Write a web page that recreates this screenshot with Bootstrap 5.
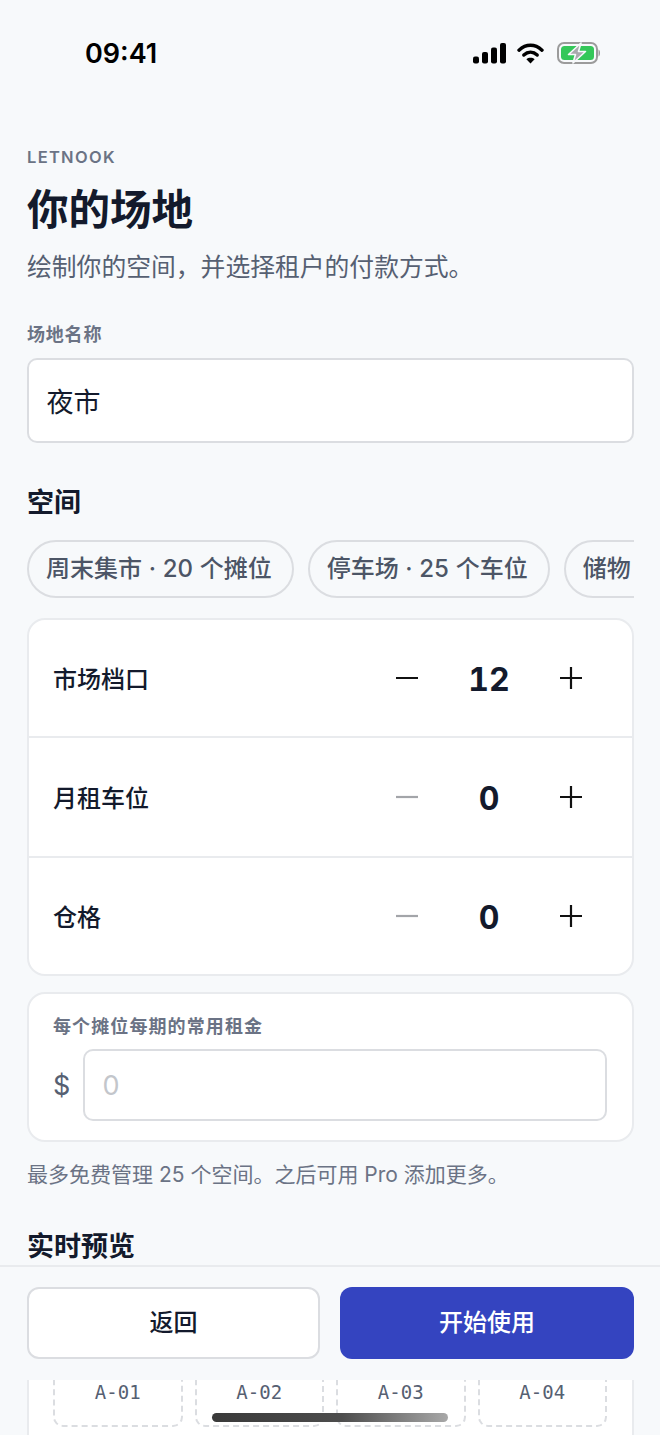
<!DOCTYPE html>
<html lang="zh">
<head>
<meta charset="utf-8">
<title>你的场地</title>
<link href="https://cdn.jsdelivr.net/npm/bootstrap@5.3.0/dist/css/bootstrap.min.css" rel="stylesheet">
<style>
html,body{height:1435px;overflow:hidden;background:#f7f9fb}
body{font-family:Inter,"Noto Sans CJK SC",sans-serif;color:#131a2c}
.phone{position:relative;width:660px;height:1435px;overflow:hidden;background:#f7f9fb}
.status-row{height:108px;padding:37px 59px 39px 85px}
.clock{font-size:27px;font-weight:600;line-height:32px;color:#000;padding-top:2px}
.status-icons{gap:11px}
.status-icons svg:last-child{margin-left:2px}
.content{padding:38px 26px 0 27px}
.brand{font-size:16.5px;font-weight:600;letter-spacing:1.3px;color:#6b7385;line-height:22px;margin:0}
.page-title{font-size:41.5px;font-weight:700;line-height:52px;margin:16px 0 0;color:#131a2c}
.sub{font-size:24.8px;line-height:32px;color:#566072;margin:15px 0 0}
.fld-label{font-size:18px;font-weight:600;letter-spacing:.8px;line-height:24px;color:#6b7385;margin:40px 0 11px;display:block}
.name-input.form-control{height:85px;font-size:27px;padding:0 17.5px;border:2px solid #dbdde1;border-radius:10px;color:#131a2c;background:#fff}
.sect{font-size:27px;font-weight:600;line-height:36px;margin:42px 0 0;color:#131a2c}
.chips{margin-top:19px;overflow:hidden;width:607px;gap:14px}
.chip-pill{flex:none;height:58px;border:2px solid #dbdde1;border-radius:29px;padding:0 20px 0 17px;font-size:24px;font-weight:500;word-spacing:.3px;line-height:54px;color:#4c5566;background:#f7f9fb;white-space:nowrap}
.chip-partial{width:120px}
.units.card{margin-top:20px;border:2px solid #e9ebee;border-radius:18px;overflow:hidden;background:#fff;width:607px}
.unit-row{height:120px;padding:0 50px 0 24px;border-bottom:2px solid #e9ebee;font-size:24px;font-weight:500}
.unit-row:first-child{height:118px}
.unit-row:last-child{border-bottom:0;height:116px}
.unit-name{flex-grow:1;padding-top:3px}
.step-val{width:142px;padding-top:3px;text-align:center;font-size:32px;font-weight:700;font-variant-numeric:tabular-nums;color:#131a2c}
.step-ico{display:block;width:22px;height:22px}
.rent.card{margin-top:16px;border:2px solid #e9ebee;border-radius:18px;background:#fff;width:607px;height:150px;padding:20px 25px 0 24px}
.rent-label{font-size:18px;font-weight:600;letter-spacing:1.1px;line-height:26px;color:#6b7385;margin:0 0 9px}
.dollar{font-size:27px;color:#566072;width:30px;flex:none;line-height:1}
.rent-input.form-control{height:72px;font-size:27px;padding:0 17.5px;border:2px solid #dbdde1;border-radius:10px;background:#fff}
.rent-input.form-control::placeholder{color:#c3c6cb;opacity:1}
.hint{font-size:21px;line-height:30px;color:#6b7385;margin:18px 0 0}
.sect-preview{font-weight:700;margin:39px 0 0;line-height:36px}
.preview.card{margin-top:66px;border:2px solid #e9ebee;border-radius:18px;background:#fff;width:607px;height:200px;padding:26px 25px 0 24px;gap:12px;flex-direction:row}
.tile{flex:1 1 0;height:68px;border:2px dashed #dbdde1;border-radius:10px;text-align:center;font-family:"DejaVu Sans Mono",monospace;font-size:19px;line-height:62px;color:#566072}
.action-bar{position:absolute;left:0;right:0;top:1265px;height:115px;background:#f7f9fb;border-top:2px solid #e9ebee;padding:20px 26px 0 27px;gap:20px}
.btn.act{height:72px;font-size:24px;font-weight:500;border-radius:12px;display:flex;align-items:center;justify-content:center;padding:0}
.btn.act-back{flex:0 0 293px;background:#fff;border:2px solid #dbdde1;color:#131a2c}
.btn.act-go{flex:0 0 294px;background:#3444c0;border:0;color:#fff}
.home-bar{position:absolute;left:212px;top:1413px;width:236px;height:9px;border-radius:5px;background:linear-gradient(90deg,#3a3a3a 0%,#4d4d4d 55%,#a8a8a8 100%)}
</style>
</head>
<body>
<div class="phone">
  <div class="status-row d-flex justify-content-between align-items-center">
    <div class="clock">09:41</div>
    <div class="status-icons d-flex align-items-center">
      <svg width="33" height="21" viewBox="0 0 33 21" aria-hidden="true"><rect x="0" y="13.5" width="6" height="7" rx="2" fill="#000"/><rect x="9" y="9" width="6" height="11.5" rx="2" fill="#000"/><rect x="18" y="4.5" width="6" height="16" rx="2" fill="#000"/><rect x="27" y="0" width="6" height="20.5" rx="2" fill="#000"/></svg>
      <svg width="27" height="21" viewBox="0 0 27 21" aria-hidden="true"><path d="M2 7.2C9 .6 18 .6 25 7.2" fill="none" stroke="#000" stroke-width="3.4" stroke-linecap="round"/><path d="M6.8 12C10.8 8.3 16.2 8.3 20.2 12" fill="none" stroke="#000" stroke-width="3.4" stroke-linecap="round"/><path d="M13.5 20.6 9.4 16.2C11.6 14.3 15.4 14.3 17.6 16.2Z" fill="#000"/></svg>
      <svg width="44" height="22" viewBox="0 0 44 22" aria-hidden="true"><rect x="1" y="1" width="39" height="20" rx="6" fill="none" stroke="#9b9b9b" stroke-width="2"/><path d="M41.5 7.5c2 .6 2 6.4 0 7z" fill="#9b9b9b"/><rect x="4" y="4" width="33" height="14" rx="3.5" fill="#34c759"/><path d="M24 1 11.5 12.5H18.5L16 21 28.5 9.5H21.5Z" fill="#a9aaae" stroke="#f7f9fb" stroke-width="1.6" stroke-linejoin="round"/></svg>
    </div>
  </div>
  <main class="content">
    <p class="brand">LETNOOK</p>
    <h1 class="page-title">你的场地</h1>
    <p class="sub">绘制你的空间，并选择租户的付款方式。</p>
    <label class="fld-label" for="venue">场地名称</label>
    <input id="venue" class="form-control name-input" value="夜市">
    <h2 class="sect">空间</h2>
    <div class="chips d-flex">
      <span class="chip-pill">周末集市 · 20 个摊位</span>
      <span class="chip-pill">停车场 · 25 个车位</span>
      <span class="chip-pill chip-partial">储物</span>
    </div>
    <div class="card units">
      <div class="unit-row d-flex align-items-center">
        <span class="unit-name">市场档口</span>
        <svg class="step-ico" viewBox="0 0 22 22" aria-hidden="true"><path d="M0 11H22" stroke="#111" stroke-width="2.2"/></svg>
        <span class="step-val">12</span>
        <svg class="step-ico" viewBox="0 0 22 22" aria-hidden="true"><path d="M0 11H22M11 0V22" stroke="#111" stroke-width="2.2"/></svg>
      </div>
      <div class="unit-row d-flex align-items-center">
        <span class="unit-name">月租车位</span>
        <svg class="step-ico" viewBox="0 0 22 22" aria-hidden="true"><path d="M0 11H22" stroke="#a3a5a9" stroke-width="2.2"/></svg>
        <span class="step-val">0</span>
        <svg class="step-ico" viewBox="0 0 22 22" aria-hidden="true"><path d="M0 11H22M11 0V22" stroke="#111" stroke-width="2.2"/></svg>
      </div>
      <div class="unit-row d-flex align-items-center">
        <span class="unit-name">仓格</span>
        <svg class="step-ico" viewBox="0 0 22 22" aria-hidden="true"><path d="M0 11H22" stroke="#a3a5a9" stroke-width="2.2"/></svg>
        <span class="step-val">0</span>
        <svg class="step-ico" viewBox="0 0 22 22" aria-hidden="true"><path d="M0 11H22M11 0V22" stroke="#111" stroke-width="2.2"/></svg>
      </div>
    </div>
    <div class="card rent">
      <p class="rent-label">每个摊位每期的常用租金</p>
      <div class="d-flex align-items-center">
        <span class="dollar">$</span>
        <input class="form-control rent-input" placeholder="0">
      </div>
    </div>
    <p class="hint">最多免费管理 25 个空间。之后可用 Pro 添加更多。</p>
    <h2 class="sect sect-preview">实时预览</h2>
    <div class="card preview">
      <div class="tile">A-01</div>
      <div class="tile">A-02</div>
      <div class="tile">A-03</div>
      <div class="tile">A-04</div>
    </div>
  </main>
  <div class="action-bar d-flex">
    <button type="button" class="btn act act-back">返回</button>
    <button type="button" class="btn act act-go">开始使用</button>
  </div>
  <div class="home-bar"></div>
</div>
</body>
</html>
